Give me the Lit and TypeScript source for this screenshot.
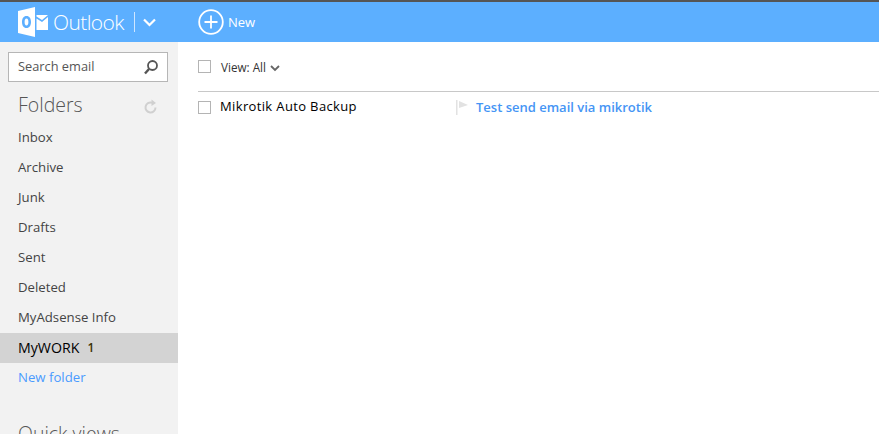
import { LitElement, html, css } from "lit";
import { customElement } from "lit/decorators.js";

@customElement("app-root")
export class AppRoot extends LitElement {
  static styles = css`
    :host { display: block; width: 879px; height: 434px; overflow: hidden; font-family: "Open Sans", "Noto Sans", sans-serif; background: #fff; }
    .top { height: 42px; box-sizing: border-box; border-top: 2px solid #555; background: #5cafff; display: flex; align-items: center; color: #fff; }
    .logo { margin-left: 18px; width: 31px; height: 32px; display: block; flex: none; }
    .brand { font-weight: 300; font-size: 21px; letter-spacing: -0.6px; margin-left: 4px; width: 81px; flex: none; line-height: 28px; }
    .sep { width: 1px; height: 20px; background: #cfe6ff; }
    .chev { display: block; margin-left: 8px; }
    .plus { display: block; margin-left: 42px; }
    .new { font-size: 13px; font-weight: 500; margin-left: 4px; }
    .body { display: flex; height: 392px; }
    .side { width: 178px; flex: none; background: #f2f2f2; overflow: hidden; }
    .search { margin: 10px 10px 0 8px; height: 30px; box-sizing: border-box; border: 1px solid #b6b6b6; background: #fff; display: flex; align-items: center; justify-content: space-between; padding: 0 8px 2px 9px; font-size: 12.8px; color: #555; }
    .search svg { margin-top: 2px; }
    .head { display: flex; align-items: center; justify-content: space-between; padding: 4px 20px 0 18px; height: 37px; font-weight: 300; font-size: 19.5px; color: #555; }
    .head svg { display: block; margin-top: 3px; }
    .item { height: 30px; box-sizing: border-box; padding: 0 0 2px 18px; display: flex; align-items: center; font-size: 13.2px; color: #444; }
    .sel { background: #d3d3d3; color: #000; font-weight: 500; font-size: 14.2px; }
    .count { margin-left: 8px; font-size: 12px; font-weight: 600; color: #3a3000; }
    .link { color: #4a9bff; }
    .quick { padding: 27px 0 0 18px; font-weight: 300; font-size: 19.5px; color: #555; line-height: 28px; white-space: nowrap; }
    .main { flex: 1; min-width: 0; padding-left: 20px; }
    .toolbar { height: 49px; display: flex; align-items: center; border-bottom: 1px solid #c8c8c8; }
    .box { width: 11px; height: 11px; border: 1px solid #b4b4b4; background: #fff; flex: none; }
    .view { margin-left: 10px; font-size: 11.7px; color: #333; }
    .toolbar svg { display: block; margin-left: 4px; margin-top: 3px; }
    .row { height: 30px; display: flex; align-items: center; }
    .from { width: 236px; margin-left: 9px; font-size: 13px; font-weight: 500; color: #000; flex: none; margin-top: -2px; letter-spacing: .36px; white-space: nowrap; }
    .flag { display: block; flex: none; }
    .subject { margin-left: 7px; font-size: 13px; font-weight: 600; color: #4595f5; white-space: nowrap; }
  `;

  render() {
    const folders = ["Inbox", "Archive", "Junk", "Drafts", "Sent", "Deleted", "MyAdsense Info"];
    return html`
      <div class="top">
        <svg class="logo" viewBox="0 0 31 32">
          <path fill="#fff" d="M0 5 L17 1 V31 L0 27 Z"/>
          <path fill="#5cafff" d="M8.5 10 c-3 0 -4.5 2.6 -4.500 6 s1.500 6 4.500 6 s4.500 -2.600 4.500 -6 s-1.500 -6 -4.500 -6 Z M8.500 12.500 c1.300 0 1.900 1.500 1.900 3.500 s-.6 3.500 -1.900 3.500 s-1.900 -1.500 -1.900 -3.500 s.6 -3.500 1.900 -3.500 Z"/>
          <path fill="#fff" d="M18.500 9 H30 L24 14 L18.500 10.500 Z M18.500 12.500 L24 16 L30 11 V24 H18.500 Z"/>
        </svg>
        <div class="brand">Outlook</div>
        <div class="sep"></div>
        <svg class="chev" width="13" height="9" viewBox="0 0 13 9"><path d="M1 1.500 L6.500 7 L12 1.500" fill="none" stroke="#fff" stroke-width="2.200"/></svg>
        <svg class="plus" width="26" height="26" viewBox="0 0 26 26"><circle cx="13" cy="13" r="11.800" fill="none" stroke="#fff" stroke-width="1.800"/><path d="M13 6.500 V19.500 M6.500 13 H19.500" stroke="#fff" stroke-width="1.800"/></svg>
        <div class="new">New</div>
      </div>
      <div class="body">
        <div class="side">
          <div class="search">
            <span>Search email</span>
            <svg width="16" height="16" viewBox="0 0 16 16"><circle cx="9.500" cy="6.500" r="4.500" fill="none" stroke="#555" stroke-width="1.800"/><path d="M6 10 L2 14.500" stroke="#555" stroke-width="2.400"/></svg>
          </div>
          <div class="head">
            <span>Folders</span>
            <svg width="14" height="15" viewBox="0 0 14 15"><path d="M11.500 8.500 A5 5 0 1 1 8 3.700" fill="none" stroke="#d0d0d0" stroke-width="2"/><path d="M7.500 .5 L12 4 L7.500 7 Z" fill="#d0d0d0"/></svg>
          </div>
          ${folders.map((f) => html`<div class="item">${f}</div>`)}
          <div class="item sel">MyWORK<span class="count">1</span></div>
          <div class="item link">New folder</div>
          <div class="quick">Quick views</div>
        </div>
        <div class="main">
          <div class="toolbar">
            <div class="box"></div>
            <span class="view">View: All</span>
            <svg width="10" height="7" viewBox="0 0 10 7"><path d="M1 1 L5 5 L9 1" fill="none" stroke="#666" stroke-width="1.800"/></svg>
          </div>
          <div class="row">
            <div class="box"></div>
            <div class="from">Mikrotik Auto Backup</div>
            <svg class="flag" width="13" height="15" viewBox="0 0 13 15"><rect x="0" y="0" width="1.500" height="15" fill="#e2e2e2"/><path d="M3 1 L12 5 L3 8 Z" fill="#e2e2e2"/></svg>
            <div class="subject">Test send email via mikrotik</div>
          </div>
        </div>
      </div>
    `;
  }
}
